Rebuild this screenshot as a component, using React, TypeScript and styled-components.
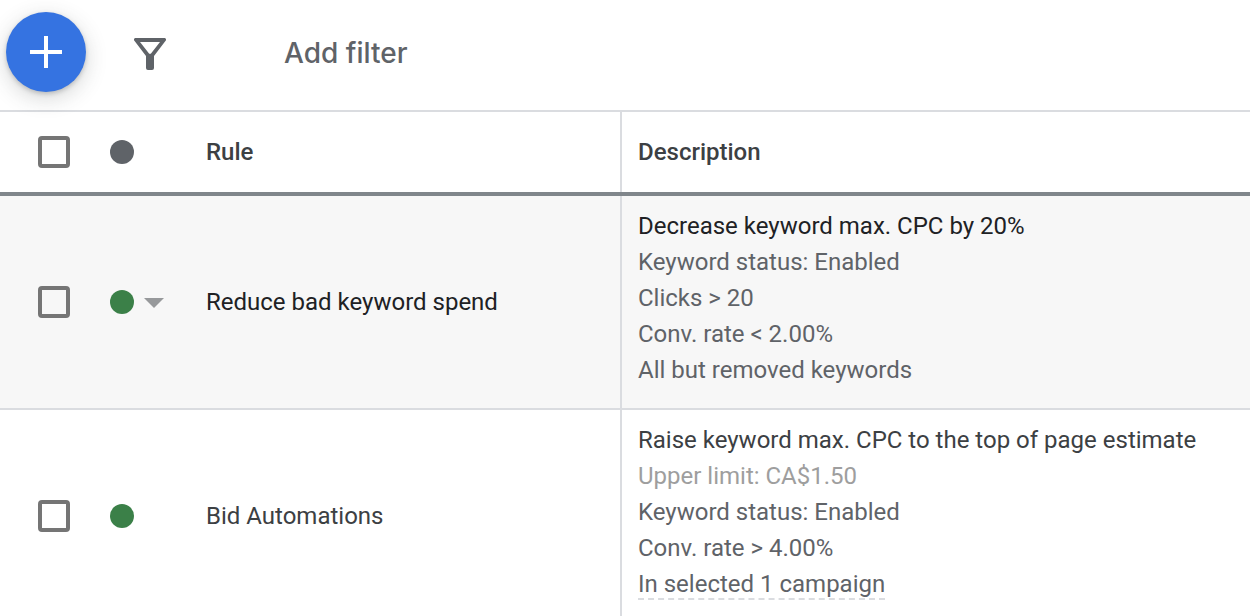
import React from "react";
import styled, { createGlobalStyle } from "styled-components";

const GlobalStyle = createGlobalStyle`
  *, *::before, *::after { box-sizing: border-box; }
  body {
    margin: 0;
    background: #fff;
    color: #3c4043;
    font-family: Roboto, "Liberation Sans", sans-serif;
    font-size: 24px;
    line-height: 36px;
  }
`;

const Page = styled.main`
  height: 100vh;
  overflow: hidden;
`;

const Toolbar = styled.header`
  display: flex;
  align-items: center;
  height: 112px;
  padding: 0 6px 6px;
  border-bottom: 2px solid #dadce0;
`;

const AddButton = styled.button`
  display: flex;
  flex: none;
  align-items: center;
  justify-content: center;
  width: 80px;
  height: 80px;
  padding: 0;
  border: 0;
  border-radius: 50%;
  background: #3573e1;
  color: #fff;
  box-shadow: 0 2px 4px rgba(60, 64, 67, 0.25), 0 6px 20px 2px rgba(60, 64, 67, 0.18);
  cursor: pointer;
`;

const FilterButton = styled.button`
  display: flex;
  flex: none;
  margin: 4px 0 0 48px;
  padding: 0;
  border: 0;
  background: none;
  color: #5f6368;
  cursor: pointer;
`;

const FilterInput = styled.input`
  flex: 1;
  min-width: 0;
  height: 48px;
  margin: 2px 0 0 118px;
  padding: 0;
  border: 0;
  outline: 0;
  background: none;
  color: #3c4043;
  font-family: "Google Sans", Inter, sans-serif;
  font-size: 28px;
  font-weight: 500;
  &::placeholder {
    color: #5f6368;
    opacity: 1;
  }
`;

const Table = styled.table`
  width: 100%;
  table-layout: fixed;
  border-collapse: collapse;
`;

const CheckCol = styled.col`
  width: 94px;
`;
const StatusCol = styled.col`
  width: 96px;
`;
const RuleCol = styled.col`
  width: 431px;
`;

const HeadCell = styled.th<{ $divided?: boolean }>`
  box-sizing: content-box;
  height: 80px;
  padding: 0 16px;
  border-bottom: 4px solid #80868b;
  border-left: ${(p) => (p.$divided ? "2px solid #dadce0" : "0")};
  font-weight: 500;
  text-align: left;
`;

const Row = styled.tr<{ $active?: boolean }>`
  background: ${(p) => (p.$active ? "#f7f7f7" : "#fff")};
  color: ${(p) => (p.$active ? "#202124" : "#3c4043")};
`;

const Cell = styled.td<{ $divided?: boolean }>`
  padding: 0 16px;
  border-bottom: 2px solid #dadce0;
  border-left: ${(p) => (p.$divided ? "2px solid #dadce0" : "0")};
`;

const DescriptionCell = styled(Cell)`
  padding: 12px 16px 20px;
`;

const CheckWrap = styled.label`
  display: flex;
  padding-left: 22px;
`;

const Checkbox = styled.input`
  appearance: none;
  width: 32px;
  height: 32px;
  margin: 0;
  border: 4px solid #757575;
  border-radius: 4px;
  cursor: pointer;
  &:checked {
    background: #3573e1;
    border-color: #3573e1;
  }
`;

const Status = styled.div`
  display: flex;
  align-items: center;
  gap: 10px;
`;

const Dot = styled.span<{ $color: string }>`
  flex: none;
  width: 24px;
  height: 24px;
  border-radius: 50%;
  background: ${(p) => p.$color};
`;

const MenuButton = styled.button`
  display: flex;
  padding: 2px 0 0;
  border: 0;
  background: none;
  color: #97999b;
  cursor: pointer;
`;

const Line = styled.div<{ $tone?: "title" | "muted" }>`
  color: ${(p) =>
    p.$tone === "title" ? "inherit" : p.$tone === "muted" ? "#9e9e9e" : "#5f6368"};
`;

const CampaignLink = styled.a`
  display: inline-block;
  height: 34px;
  color: inherit;
  text-decoration: none;
  vertical-align: top;
  border-bottom: 2px dashed #dadce0;
`;

type Detail = { text: string; muted?: boolean; link?: boolean };
type Rule = { name: string; action: string; details: Detail[]; active?: boolean };

const rules: Rule[] = [
  {
    name: "Reduce bad keyword spend",
    action: "Decrease keyword max. CPC by 20%",
    active: true,
    details: [
      { text: "Keyword status: Enabled" },
      { text: "Clicks > 20" },
      { text: "Conv. rate < 2.00%" },
      { text: "All but removed keywords" },
    ],
  },
  {
    name: "Bid Automations",
    action: "Raise keyword max. CPC to the top of page estimate",
    details: [
      { text: "Upper limit: CA$1.50", muted: true },
      { text: "Keyword status: Enabled" },
      { text: "Conv. rate > 4.00%" },
      { text: "In selected 1 campaign", link: true },
    ],
  },
];

function PlusIcon() {
  return (
    <svg width="32" height="32" viewBox="0 0 32 32" aria-hidden="true">
      <path d="M14 0h4v14h14v4H18v14h-4V18H0v-4h14z" fill="currentColor" />
    </svg>
  );
}

function FilterIcon() {
  return (
    <svg width="32" height="32" viewBox="0 0 32 32" aria-hidden="true">
      <path
        fill="currentColor"
        fillRule="evenodd"
        d="M1.6 0h28.8c1.5 0 2.1 1.7 1.2 2.8L20 18V30a2 2 0 0 1-2 2h-4a2 2 0 0 1-2-2V18L.4 2.8C-.5 1.7.1 0 1.6 0zM6 4l9.2 11.8h1.6L26 4z"
      />
    </svg>
  );
}

function CaretIcon() {
  return (
    <svg width="20" height="10" viewBox="0 0 20 10" aria-hidden="true">
      <path d="M0 0h20L10 10z" fill="currentColor" />
    </svg>
  );
}

export default function App() {
  return (
    <Page>
      <GlobalStyle />
      <Toolbar>
        <AddButton type="button" aria-label="Create rule">
          <PlusIcon />
        </AddButton>
        <FilterButton type="button" aria-label="Filter">
          <FilterIcon />
        </FilterButton>
        <FilterInput type="text" placeholder="Add filter" aria-label="Add filter" />
      </Toolbar>
      <Table>
        <colgroup>
          <CheckCol />
          <StatusCol />
          <RuleCol />
          <col />
        </colgroup>
        <thead>
          <tr>
            <HeadCell>
              <CheckWrap>
                <Checkbox type="checkbox" aria-label="Select all rules" />
              </CheckWrap>
            </HeadCell>
            <HeadCell aria-label="Status">
              <Status>
                <Dot $color="#5f6368" />
              </Status>
            </HeadCell>
            <HeadCell>Rule</HeadCell>
            <HeadCell $divided>Description</HeadCell>
          </tr>
        </thead>
        <tbody>
          {rules.map((rule) => (
            <Row key={rule.name} $active={rule.active}>
              <Cell>
                <CheckWrap>
                  <Checkbox type="checkbox" aria-label={`Select ${rule.name}`} />
                </CheckWrap>
              </Cell>
              <Cell>
                <Status>
                  <Dot $color="#3b8048" />
                  {rule.active && (
                    <MenuButton type="button" aria-label="Change status">
                      <CaretIcon />
                    </MenuButton>
                  )}
                </Status>
              </Cell>
              <Cell>{rule.name}</Cell>
              <DescriptionCell $divided>
                <Line $tone="title">{rule.action}</Line>
                {rule.details.map((d) => (
                  <Line key={d.text} $tone={d.muted ? "muted" : undefined}>
                    {d.link ? <CampaignLink href="#campaigns">{d.text}</CampaignLink> : d.text}
                  </Line>
                ))}
              </DescriptionCell>
            </Row>
          ))}
        </tbody>
      </Table>
    </Page>
  );
}
